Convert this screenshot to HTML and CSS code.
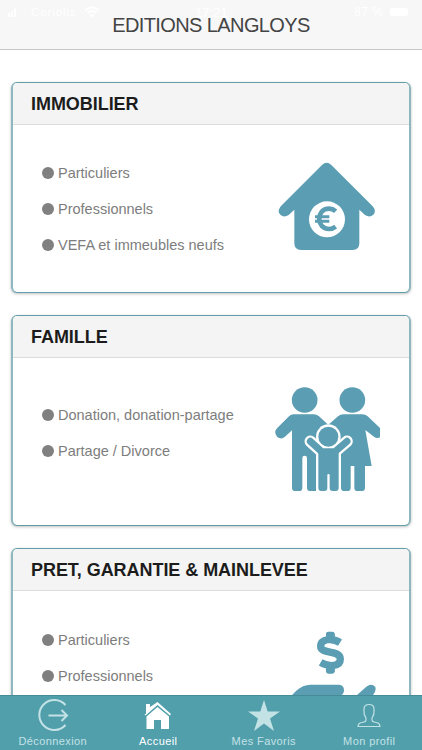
FILE: index.html
```html
<!DOCTYPE html>
<html lang="fr">
<head>
<meta charset="utf-8">
<title>Editions Langloys</title>
<link rel="stylesheet" href="styles.css">
</head>
<body>
<div class="app">
  <header class="header">
    <div class="status">
      <svg class="signal" viewBox="0 0 12 9"><path d="M0 5h2v4H0zM3 3.500h2V9H3zM6 0.500h2V9H6z"/></svg>
      <span class="carrier">Coriolis</span>
      <svg class="wifi" viewBox="0 0 16 12"><path d="M1 4.500Q8-2 15 4.500M3.500 7Q8 3 12.500 7" fill="none" stroke="#fff" stroke-width="2"/><path d="M5.500 9Q8 7 10.500 9L8 11.500z"/></svg>
      <span class="clock">17:21</span>
      <span class="percent">87 %</span>
      <span class="battery"></span>
    </div>
    <h1 class="title">EDITIONS LANGLOYS</h1>
  </header>
  <main class="content">
    <section class="card">
      <h2 class="card-title"><span>IMMOBILIER</span></h2>
      <div class="card-body">
        <ul class="list"><li><span>Particuliers</span></li><li><span>Professionnels</span></li><li><span>VEFA et immeubles neufs</span></li></ul>
        <svg class="art" viewBox="0 0 390 390">
          <g transform="translate(0 18)" fill="#5b9db3">
            <path d="M186 45Q200 32 214 45L338 169Q350 183 340 194Q329 204 315 195L298 179V280Q298 300 278 300H123Q103 300 103 280V179L86 195Q72 204 61 194Q50 183 63 168Z"/>
            <circle cx="201" cy="208" r="54" fill="#fff"/>
            <path d="M227 184Q218 176 207 176C168 176 168 237 207 237Q218 237 227 230" fill="none" stroke="#5b9db3" stroke-width="14"/>
            <path d="M165 200H208M165 214H208" stroke="#5b9db3" stroke-width="9"/>
          </g>
        </svg>
      </div>
    </section>
    <section class="card">
      <h2 class="card-title"><span>FAMILLE</span></h2>
      <div class="card-body">
        <ul class="list"><li><span>Donation, donation-partage</span></li><li><span>Partage / Divorce</span></li></ul>
        <svg class="art" viewBox="0 0 390 390">
          <g transform="translate(0 42)" fill="#5b9db3">
            <circle cx="134" cy="75" r="38.500"/><circle cx="277" cy="75" r="38.500"/>
            <path d="M101 118H161Q170 118 177 124L203 148H207L234 124Q241 118 250 118H307Q316 118 323 124L360 159V187Q351 192 342 185L316 165L335 273H315V338Q315 348 305 348H293Q283 348 283 338V273H272V338Q272 348 262 348H253Q243 348 243 338V205H168V348H151Q141 348 141 338V249Q141 242 134 242Q127 242 127 249V338Q127 348 117 348H106Q96 348 96 338V166L74 186Q63 195 51 185Q40 171 51 160L87 124Q93 118 101 118Z"/>
            <circle cx="205" cy="185" r="37" fill="#fff"/>
            <path d="M151 199L185 230H225L261 199" fill="none" stroke="#fff" stroke-width="35" stroke-linecap="round" stroke-linejoin="round"/>
            <path d="M168 218H243V348H168Z" fill="#fff"/>
            <path d="M151 199L185 230H225L261 199" fill="none" stroke="#5b9db3" stroke-width="21" stroke-linecap="round" stroke-linejoin="round"/>
            <circle cx="205" cy="185" r="34" fill="#fff"/>
            <circle cx="205" cy="185" r="30"/>
            <path d="M175 225H236V339Q236 348 227 348H218Q209 348 209 339V301Q209 297 205.500 297Q202 297 202 301V339Q202 348 193 348H184Q175 348 175 339Z"/>
          </g>
        </svg>
      </div>
    </section>
    <section class="card">
      <h2 class="card-title"><span>PRET, GARANTIE &amp; MAINLEVEE</span></h2>
      <div class="card-body">
        <ul class="list"><li><span>Particuliers</span></li><li><span>Professionnels</span></li></ul>
        <svg class="art" viewBox="0 0 390 390">
          <g transform="translate(30 32)" fill="#5b9db3">
            <path d="M181 39V56M181 138V153" stroke="#5b9db3" stroke-width="25"/>
            <path d="M181 39V45M181 147V153" stroke="#5b9db3" stroke-width="25" stroke-linejoin="round"/>
            <path d="M210 66C185 50 152 55 152 77C152 102 211 86 211 115C211 138 178 140 152 125" fill="none" stroke="#5b9db3" stroke-width="22"/>
            <rect x="168" y="33" width="26" height="20" rx="7"/>
            <rect x="168" y="139" width="26" height="20" rx="7"/>
            <path d="M30 260L78 211Q99 192 121 192H208Q222 194 222 208Q222 224 206 225H157V232H251L289 198Q305 186 316 199Q320 213 306 226L260 270H30Z"/>
          </g>
        </svg>
      </div>
    </section>
  </main>
  <nav class="tabs">
    <a class="tab"><svg viewBox="0 0 34 38"><g fill="none" stroke="#c3e2e6" stroke-width="2"><path d="M29.500 9A15 15 0 1 0 29.500 29M12.500 19.500H31M25.500 14L31 19.500L25.500 25"/></g></svg><span>Déconnexion</span></a>
    <a class="tab active"><svg viewBox="0 0 34 38"><path d="M5 18V8H9V11L16.500 6L30 18L29 19.500L16.500 9L4.500 19.500L3.500 18Z" fill="#fff"/><path d="M5.500 20.500L16.500 11L28 20.500V33H20V24H13V33H5.500Z" fill="#fff"/></svg><span>Accueil</span></a>
    <a class="tab"><svg viewBox="0 0 34 38"><path d="M17 4L20.700 15.500H33L23 22.500L27 35L17 27.500L7 35L11 22.500L1 15.500H13.300Z" fill="#c3e2e6"/></svg><span>Mes Favoris</span></a>
    <a class="tab"><svg viewBox="0 0 34 38"><path d="M14 22C11 18 12 15 12 13Q12 8.500 17 8.500Q22 8.500 22 13C22 15 23 18 20 22V24Q20 25.500 22 26L26 27Q28 28 28 30.500H6Q6 28 8 27L12 26Q14 25.500 14 24Z" fill="none" stroke="#c3e2e6" stroke-width="1.200"/></svg><span>Mon profil</span></a>
  </nav>
</div>
</body>
</html>
```
FILE: styles.css
```css
* { box-sizing: border-box; }
body { margin: 0; font-family: "Liberation Sans", Arial, sans-serif; background: #fff; }
.app { width: 422px; height: 750px; display: flex; flex-direction: column; overflow: hidden; }
.header { flex: none; height: 50px; background: #f7f7f7; border-bottom: 1px solid #c6c6c6; position: relative; padding-top: 13px; }
.status { position: absolute; inset: 0 0 auto; height: 24px; color: #fff; font-size: 11.5px; display: flex; align-items: center; padding-left: 8px; }
.status svg { fill: #fff; }
.signal { width: 12px; height: 9px; }
.carrier { width: 53px; margin-left: 11px; letter-spacing: 0.9px; }
.wifi { width: 16px; height: 12px; }
.clock { margin-left: 95px; width: 34px; font-size: 13px; }
.percent { margin-left: 125px; width: 36px; font-size: 12px; letter-spacing: 0.5px; }
.battery { width: 18px; height: 8px; background: #fff; border-radius: 2px; }
.title { position: relative; margin: 0; text-align: center; font-size: 20px; font-weight: 400; line-height: 24px; letter-spacing: -0.6px; color: #444; }
.content { flex: 1; min-height: 0; overflow: hidden; padding: 32px 11px 0; display: flex; flex-direction: column; gap: 22px; }
.card { flex: none; height: 211px; border: solid #609faa; border-width: 1px 2px; border-left-color: #8eb8bf; border-right-color: #8eb8bf; border-radius: 6px; box-shadow: 0 1px 3px rgba(0,0,0,.25); overflow: hidden; background: #fff; }
.card-title { margin: 0; height: 42px; padding: 0 18px; background: #f4f4f4; border-bottom: 1px solid #dcdcdc; font-size: 18px; font-weight: 700; line-height: 42px; letter-spacing: -0.05px; color: #1c1c1c; }
.card-body { display: flex; justify-content: space-between; height: 167px; padding-right: 19px; }
.list { margin: 0; padding: 30px 0 0 29px; list-style: none; flex: none; }
.list li { display: flex; align-items: center; height: 36px; gap: 4px; font-size: 14.5px; color: #7d7d7d; white-space: nowrap; }
.list li::before { content: ""; width: 12px; height: 12px; border-radius: 50%; background: #808080; }
.card:nth-child(2) .list { padding-top: 39px; }
.card:nth-child(3) .list { padding-top: 31px; }
.art { width: 130px; height: 130px; margin-top: 19px; flex: none; }
.card:nth-child(2) .art { margin-top: 3px; }
.tabs { flex: none; height: 55px; background: #529fac; border-top: 1px solid #438c98; display: flex; position: relative; }
.tab { flex: 1; display: flex; flex-direction: column; align-items: center; color: #c3e2e6; font-size: 11px; letter-spacing: 0.4px; }
.tab svg { width: 34px; height: 38px; }
.tab span { line-height: 14px; }
.tab.active { color: #fff; }
```
